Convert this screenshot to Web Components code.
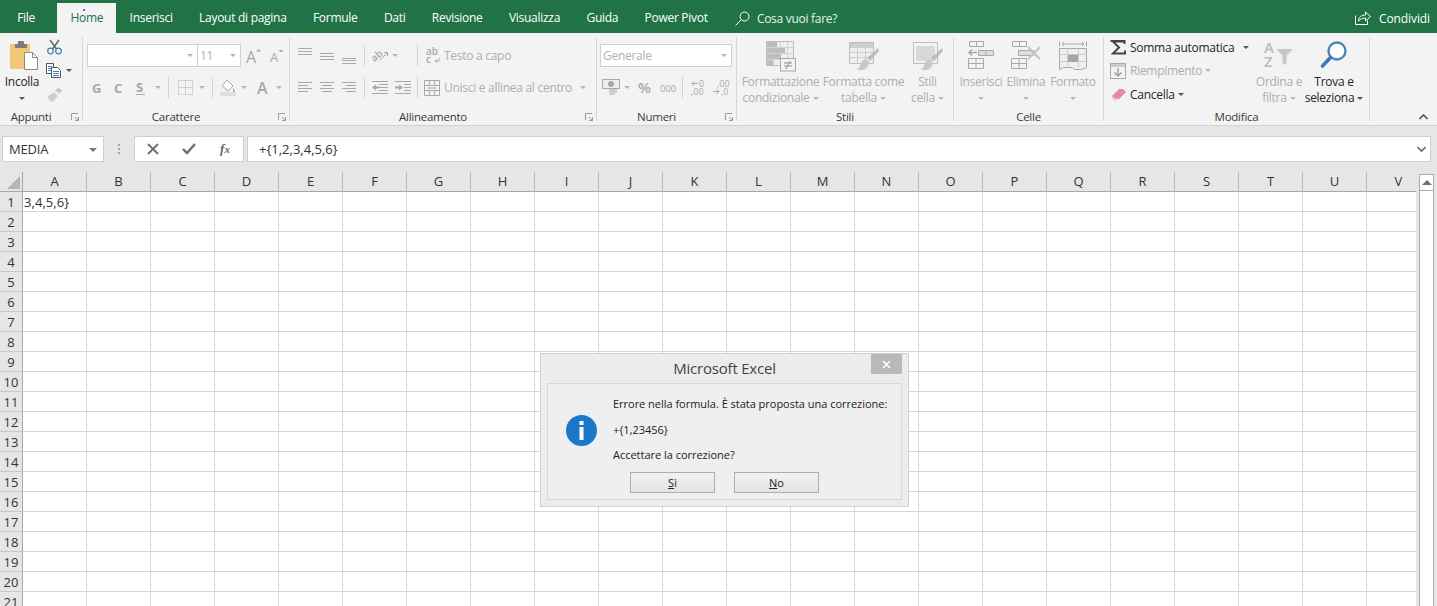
<!DOCTYPE html>
<html lang="it">
<head>
<meta charset="utf-8">
<title>Excel</title>
<style>
html,body{margin:0;height:100%;overflow:hidden;background:#e6e6e6}
body{font-family:"Open Sans","Liberation Sans",sans-serif;font-size:12px}
</style>
</head>
<body>
<xl-app>
  <xl-tabbar></xl-tabbar>
  <xl-ribbon>
    <xl-group label="Appunti" launcher w="83">
      <div style="display:flex">
        <xl-big icon="paste" w="44">Incolla<br></xl-big>
        <div style="display:grid;grid-template-rows:20px 26px 22px">
          <xl-row><xl-icon name="scissors" box="20"></xl-icon></xl-row>
          <xl-row><xl-icon name="copy" box="20"></xl-icon><xl-caret box="10" on></xl-caret></xl-row>
          <xl-row><xl-icon name="brush" box="20"></xl-icon></xl-row>
        </div>
      </div>
    </xl-group>
    <xl-group label="Carattere" launcher w="207">
      <xl-rows left="4">
        <xl-row><xl-combo w="111"></xl-combo><xl-combo w="44" value="11"></xl-combo><xl-icon name="growA" box="23" style="margin-left:2px"></xl-icon><xl-icon name="shrinkA" box="23"></xl-icon></xl-row>
        <xl-row><xl-icon name="bold" box="21" style="margin-left:-1px"></xl-icon><xl-icon name="italic" box="23"></xl-icon><xl-icon name="under" box="22"></xl-icon><xl-caret box="11"></xl-caret><xl-sep box="11"></xl-sep><xl-icon name="borders" box="22"></xl-icon><xl-caret box="11"></xl-caret><xl-sep box="10"></xl-sep><xl-icon name="fill" box="24" style="margin-left:-1px"></xl-icon><xl-caret box="8"></xl-caret><xl-icon name="fontA" box="28" style="margin-left:1px"></xl-icon><xl-caret box="4"></xl-caret></xl-row>
      </xl-rows>
    </xl-group>
    <xl-group label="Allineamento" launcher w="307">
      <xl-rows left="4">
        <xl-row><xl-icon name="atop" box="22"></xl-icon><xl-icon name="amid" box="22"></xl-icon><xl-icon name="abot" box="22"></xl-icon><xl-sep box="8"></xl-sep><xl-icon name="orient" box="24"></xl-icon><xl-caret box="6"></xl-caret><span style="width:14px"></span><xl-sep box="10"></xl-sep><xl-icon name="wrap" box="22"></xl-icon><xl-text dim>Testo a capo</xl-text></xl-row>
        <xl-row><xl-icon name="aleft" box="22"></xl-icon><xl-icon name="acenter" box="22"></xl-icon><xl-icon name="aright" box="22"></xl-icon><xl-sep box="8"></xl-sep><xl-icon name="outdent" box="24"></xl-icon><xl-icon name="indent" box="22"></xl-icon><xl-sep box="6"></xl-sep><xl-icon name="merge" box="24"></xl-icon><xl-text dim style="width:134px">Unisci e allinea al centro</xl-text><xl-caret box="10"></xl-caret></xl-row>
      </xl-rows>
    </xl-group>
    <xl-group label="Numeri" launcher w="140">
      <xl-rows left="3">
        <xl-row><xl-combo w="132" value="Generale" tight></xl-combo></xl-row>
        <xl-row><xl-icon name="money" box="22"></xl-icon><xl-caret box="10"></xl-caret><xl-icon name="percent" box="26"></xl-icon><xl-icon name="thousand" box="19"></xl-icon><xl-sep box="10"></xl-sep><xl-icon name="decup" box="21"></xl-icon><xl-icon name="decdown" box="23"></xl-icon></xl-row>
      </xl-rows>
    </xl-group>
    <xl-group label="Stili" w="217">
      <div style="display:flex;padding-left:2px">
        <xl-big icon="condfmt" w="83" dim caret>Formattazione<br>condizionale</xl-big>
        <xl-big icon="tablefmt" w="83" dim caret>Formatta come<br>tabella</xl-big>
        <xl-big icon="cellstyle" w="45" dim caret>Stili<br>cella</xl-big>
      </div>
    </xl-group>
    <xl-group label="Celle" w="150">
      <div style="display:flex;padding-left:4px">
        <xl-big icon="insert" w="46" dim>Inserisci<br></xl-big>
        <xl-big icon="delete" w="44" dim>Elimina<br></xl-big>
        <xl-big icon="format" w="50" dim>Formato<br></xl-big>
      </div>
    </xl-group>
    <xl-group label="Modifica" w="266">
      <div style="display:flex;padding-left:4px">
        <div style="width:146px;display:grid;grid-template-rows:20px 27px 20px">
          <xl-row><xl-icon name="sigma" box="20"></xl-icon><xl-text strong style="width:112px;margin-left:2px">Somma automatica</xl-text><xl-caret box="8" on></xl-caret></xl-row>
          <xl-row><xl-icon name="fillrow" box="20"></xl-icon><xl-text dim style="margin:0 3px 0 2px">Riempimento</xl-text><xl-caret box="6"></xl-caret></xl-row>
          <xl-row><xl-icon name="eraser" box="20"></xl-icon><xl-text strong style="margin:0 3px 0 2px">Cancella</xl-text><xl-caret box="6" on></xl-caret></xl-row>
        </div>
        <xl-big icon="sort" w="50" dim caret>Ordina e<br>filtra</xl-big>
        <xl-big icon="find" w="60" caret>Trova e<br>seleziona</xl-big>
      </div>
    </xl-group>
    <xl-collapse></xl-collapse>
  </xl-ribbon>
  <xl-formula-bar name="MEDIA" value="+{1,2,3,4,5,6}"></xl-formula-bar>
  <xl-sheet></xl-sheet>
  <xl-dialog title-text="Microsoft Excel">
    <span>Errore nella formula. È stata proposta una correzione:</span>
    <span>+{1,23456}</span>
    <span>Accettare la correzione?</span>
  </xl-dialog>
</xl-app>

<script>
// icon set, each one is [width, height, inner svg]
const dim = "#c4c4c4", dk = "#a8a8a8";
const lines = (ys, xs) => ys.map((y, i) => `<path d="M${xs[i][0]} ${y + .5}H${xs[i][1]}" stroke="${dk}"/>`).join("");
const full = [[0, 14], [0, 14], [0, 14]];
const txt = (x, y, s, t, fill, extra = "") => `<text x="${x}" y="${y}" font-size="${s}" fill="${fill}" font-family="Open Sans, sans-serif" ${extra}>${t}</text>`;
const brushShape = `<path d="M29 7l1 3-9 10-3-3z" fill="#bdbdbd"/><path d="M17 18l3 3c0 3-2 7-6 8H7c3-1 4-4 5-7 1-2 3-4 5-4z" fill="#c9c9c9"/>`;
const ICONS = {
  paste: [36, 32, `<g transform="translate(4 -2)"><rect x="2" y="5" width="20" height="25" rx="1" fill="#f0c878"/><path d="M7 9V5h3V3a1 1 0 0 1 1-1h4a1 1 0 0 1 1 1v2h3v4z" fill="#7d7d7d"/><path d="M16.500 13.500h8l5 5v12h-13z" fill="#fff" stroke="#8a8a8a"/><path d="M24.500 13.500v5h5" fill="none" stroke="#8a8a8a"/></g>`],
  scissors: [15, 16, `<circle cx="3.500" cy="12" r="2.800" fill="none" stroke="#3f7fbf" stroke-width="1.200"/><circle cx="11.500" cy="12" r="2.800" fill="none" stroke="#3f7fbf" stroke-width="1.200"/><path d="M3 1l6.500 9M12 1L5.500 10" stroke="#666" stroke-width="1.500" fill="none"/>`],
  copy: [16, 15, `<path d="M.5.500h7v10h-7z" fill="#fff" stroke="#555"/><path d="M2 3.500h4M2 5.500h4M2 7.500h4" stroke="#3f7fbf"/><path d="M5.500 4.500h6l3 3v7h-9z" fill="#fff" stroke="#555"/><path d="M7 8.500h6M7 10.500h6M7 12.500h6" stroke="#3f7fbf"/>`],
  brush: [17, 15, `<path d="M1 10l7-5 4 4-5 6-3-1-1-2z" fill="#cfcfcf"/><path d="M9 4l3-3 4 2-3 4z" fill="#c0c0c0"/><path d="M10.500 3.500l2.500 3" stroke="#f3f3f3"/>`],
  growA: [16, 16, txt(0, 15, 16, "A", dk) + `<path d="M10 3.500h5L12.500 1z" fill="${dk}"/>`],
  shrinkA: [14, 14, txt(0, 13, 13, "A", dk) + `<path d="M8.500 1h5L11 3.500z" fill="${dk}"/>`],
  bold: [12, 15, txt(1, 13, 13, "G", dk, 'font-weight="700"')],
  italic: [12, 15, txt(1, 13, 13, "C", dk, 'font-weight="700"')],
  under: [12, 17, txt(1, 13, 13, "S", dk, 'font-weight="700"') + `<path d="M1 15.500h9" stroke="${dk}"/>`],
  borders: [15, 15, `<path d="M.5.500h14v14H.5zM.5 7.500h14M7.500.500v14" fill="none" stroke="#b9a9bf" stroke-dasharray="1 1"/>`],
  fill: [17, 17, `<path d="M7 1l6 6-5 5-6-5z" fill="#fff" stroke="${dk}"/><path d="M13 9c1 1.500 2 2.500 2 3.500a1 1 0 0 1-2 0z" fill="${dk}"/><rect x="0" y="13" width="16" height="4" fill="#dfdfdf"/>`],
  fontA: [14, 15, txt(1, 14, 16, "A", dk, 'font-weight="600"')],
  atop: [14, 17, lines([1, 4, 7], full)],
  amid: [14, 17, lines([6, 9, 12], full)],
  abot: [14, 17, lines([11, 13, 16], full)],
  orient: [18, 15, txt(0, 11, 10, "ab", dk, 'transform="rotate(-40 6 8)" font-weight="600"') + `<path d="M9 12l7-7M13 4.500h3.500V8" stroke="${dk}" fill="none"/>`],
  wrap: [15, 17, `<text x="0" y="8" font-size="10" fill="${dk}" font-family="Open Sans, sans-serif" font-weight="600">ab<tspan x="0" y="16">c</tspan></text><path d="M9 14h4v-3M9 14l2-1.500M9 14l2 1.500" stroke="${dk}" fill="none"/>`],
  aleft: [14, 11, lines([0, 3, 6, 9], [[0, 14], [0, 10], [0, 14], [0, 10]])],
  acenter: [14, 11, lines([0, 3, 6, 9], [[0, 14], [2, 12], [0, 14], [2, 12]])],
  aright: [14, 11, lines([0, 3, 6, 9], [[0, 14], [4, 14], [0, 14], [4, 14]])],
  outdent: [16, 13, lines([0, 12], [[0, 16], [0, 16]]) + `<path d="M7 3.500h9M7 6.500h9M7 9.500h9" stroke="${dk}"/><path d="M0 6.500L4 3.500v2h3v2H4v2z" fill="${dk}"/>`],
  indent: [16, 13, lines([0, 12], [[0, 16], [0, 16]]) + `<path d="M9 3.500h7M9 6.500h7M9 9.500h7" stroke="${dk}"/><path d="M8 6.500L4 3.500v2H0v2h4v2z" fill="${dk}"/>`],
  merge: [16, 16, `<path d="M.5.500h15v15H.5zM.5 5.500h15M.5 10.500h15M5.500.500v5M10.500.500v5M5.500 10.500v5M10.500 10.500v5" fill="none" stroke="${dk}"/><path d="M3 8h10" stroke="${dk}"/>`],
  money: [18, 17, `<rect x=".5" y=".5" width="17" height="9" fill="#eee" stroke="${dk}"/><circle cx="9" cy="5" r="3" fill="${dk}"/><path d="M7 11h8M7 13h8M7 15h6" stroke="${dim}" stroke-width="1.500"/>`],
  percent: [15, 15, txt(0, 13, 15, "%", dk, 'font-weight="600"')],
  thousand: [15, 12, txt(0, 10, 9.500, "000", dk)],
  decup: [16, 17, `<path d="M8 4.500H2M4.500 2L2 4.500 4.500 7" stroke="${dk}" fill="none"/><text font-size="9" fill="${dk}" font-family="Open Sans, sans-serif" x="9" y="8">0<tspan x="1" y="16">,00</tspan></text>`],
  decdown: [16, 17, `<path d="M1 12.500h6M4.500 10L7 12.500 4.500 15" stroke="${dk}" fill="none"/><text font-size="9" fill="${dk}" font-family="Open Sans, sans-serif" x="5" y="8">,00<tspan x="9" y="16">,0</tspan></text>`],
  condfmt: [30, 31, `<path d="M.5.500h27v24H.5z" fill="#f1edf1" stroke="#bdbdbd"/><path d="M.5 6.500h27M.5 12.500h27M.5 18.500h27M7.500.500v24M14.500.500v24M21.500.500v24" stroke="#d4d4d4"/><path d="M1 1h10v5H1zM1 7h18v5H1zM1 13h14v5H1zM1 19h6v5H1z" fill="#bdbdbd"/><rect x="14.500" y="17.500" width="15" height="12.500" fill="#f3f3f3" stroke="#a6a6a6"/><path d="M18 22h8M18 25h8M24 20l-4 8" stroke="#8f8f8f" fill="none"/>`],
  tablefmt: [30, 31, `<path d="M.5 1.500h24v21H.5z" fill="#eee" stroke="#bdbdbd"/><path d="M1 2h23v4H1z" fill="#cfcfcf"/><path d="M.5 6.500h24M.5 11.500h24M.5 16.500h24M8.500 1.500v21M16.500 1.500v21" stroke="#cdcdcd"/>` + brushShape],
  cellstyle: [30, 31, `<path d="M.5 1.500h24v21H.5z" fill="#f3f3f3" stroke="#bdbdbd"/><rect x="3" y="5" width="19" height="15" fill="#d8d8d8"/>` + brushShape],
  insert: [26, 28, `<path d="M1.500.500h14v5h-14zM8.500.500v5M.5 17.500h15v10H.5zM.5 22.500h15M8 17.500v10" fill="none" stroke="${dk}"/><path d="M1 11.500h8M4 8.500l-3 3 3 3" stroke="${dk}" fill="none" stroke-width="1.500"/><path d="M10.500 9.500h15v5h-15zM18 9.500v5" fill="#ddd" stroke="${dk}"/>`],
  delete: [30, 28, `<path d="M1.500.500h14v5h-14zM8.500.500v5M.5 17.500h15v10H.5zM.5 22.500h15M8 17.500v10" fill="none" stroke="${dk}"/><path d="M7.500 9.500h15v5h-15z" fill="#ddd" stroke="${dk}"/><path d="M17 6l12 12M29 6L17 18" stroke="${dim}" stroke-width="2"/>`],
  format: [28, 31, `<path d="M.5 .5v5M27.500 .5v5M3 3h22M3 3l2-2M3 3l2 2M25 3l-2-2M25 3l-2 2" stroke="${dk}" fill="none"/><path d="M.5 7.500h27v19l-5 2h-7l-2-2h-9l-4 2z" fill="#f1edf1" stroke="${dk}"/><path d="M.5 13.500h27M.5 20.500h27M8.500 7.500v19M19.500 7.500v19" stroke="#ccc"/><rect x="9" y="14" width="10" height="7" fill="#a6a6a6"/>`],
  sigma: [16, 15, `<path d="M.5 1h14v3M14 1.500H3l6 6-6 6h12v-3" fill="none" stroke="#444" stroke-width="2"/>`],
  fillrow: [16, 16, `<rect x=".5" y=".5" width="15" height="15" fill="#f3f3f3" stroke="${dk}"/><rect x="1" y="1" width="14" height="3" fill="#ccc"/><path d="M8 5v8M4.500 9.500L8 13l3.500-3.500" stroke="#999" stroke-width="1.300" fill="none"/>`],
  eraser: [15, 13, `<path d="M1 8l7-7h4l3 3-7 7H5z" fill="#e88a9a"/><path d="M1 8l4 4-1 1-3-3z" fill="#f2b6c0"/>`],
  sort: [30, 26, `<text font-size="15" fill="#bdbdbd" font-family="Open Sans, sans-serif" font-weight="600" x="0" y="12">A<tspan x="0" y="26">Z</tspan></text><path d="M12 8h17l-6.500 6.500V24l-4-2v-7.500z" fill="#c6c6c6"/>`],
  find: [28, 27, `<circle cx="17" cy="10" r="8.500" fill="#fff" stroke="#4a86c0" stroke-width="2.400"/><path d="M10.500 16.500L2.500 25" stroke="#3f78b4" stroke-width="3.600" stroke-linecap="round"/>`]
};

class XlApp extends HTMLElement{
  constructor(){
    super();
    this.attachShadow({ mode: "open" }).innerHTML = `
      <style>
        :host{display:flex;flex-direction:column;height:606px;width:1437px;position:relative;overflow:hidden;color:#262626}
      </style>
      <slot></slot>`;
  }
}

class XlTabbar extends HTMLElement{
  constructor(){
    super();
    const tabs = ["File","Home","Inserisci","Layout di pagina","Formule","Dati","Revisione","Visualizza","Guida","Power Pivot"];
    this.attachShadow({ mode: "open" }).innerHTML = `
      <style>
        :host{display:flex;height:33px;background:#217346;color:#fff;padding-left:4px;align-items:flex-end;flex:none}
        .tab{height:30px;line-height:29px;padding:0 13.2px;white-space:nowrap;font-size:12px;letter-spacing:-.28px}
        .tab.file{margin-right:9px}
        .on{background:#f3f3f3;color:#217346;position:relative}
        .on b{position:absolute;left:26px;top:6px;width:2px;height:2px;background:#3a3ad0;border-radius:50%}
        .tell{display:flex;align-items:center;gap:7px;height:30px;margin-left:14px;color:#e8f0eb;font-size:12px;letter-spacing:-.28px}
        .share{margin-left:auto;display:flex;align-items:center;gap:8px;height:30px;padding-right:7px;font-size:12px;letter-spacing:-.1px}
      </style>
      ${tabs.map(t => `<div class="tab ${t == "Home" ? "on" : ""} ${t == "File" ? "file" : ""}">${t == "Home" ? "<b></b>" : ""}${t}</div>`).join("")}
      <div class="tell">
        <svg width="15" height="15" viewBox="0 0 15 15" fill="none" stroke="#fff"><circle cx="9.500" cy="5.500" r="4.500"/><path d="M6 9l-5.500 5.500"/></svg>
        <span>Cosa vuoi fare?</span>
      </div>
      <div class="share">
        <svg width="16" height="14" viewBox="0 0 16 14" fill="none" stroke="#fff"><path d="M.5 4.500v9h12v-4"/><path d="M3.500 10c0-4 3-6 7-6V1l5 4.500-5 4.500V7c-3 0-5 1-7 3z"/></svg>
        <span>Condividi</span>
      </div>`;
  }
}

class XlRibbon extends HTMLElement{
  constructor(){
    super();
    this.attachShadow({ mode: "open" }).innerHTML = `
      <style>
        :host{display:flex;height:92px;background:#f3f3f3;border-bottom:1px solid #d2d2d2;flex:none;position:relative}
      </style>
      <slot></slot>`;
  }
}

class XlGroup extends HTMLElement{
  constructor(){
    super();
    this.attachShadow({ mode: "open" }).innerHTML = `
      <style>
        :host{display:flex;flex-direction:column;box-sizing:border-box;height:84px;margin-top:4px;border-right:1px solid #d6d6d6;flex:none}
        .body{height:73px;flex:none;overflow:hidden}
        .foot{display:flex;height:13px;flex:none;align-items:center;font-size:11.500px;letter-spacing:-.25px;color:#3a3a3a}
        .foot span{flex:1;text-align:center}
        .launch{width:20px;display:flex;padding-left:9px;box-sizing:border-box}
      </style>
      <div class="body"><slot></slot></div>
      <div class="foot"><span></span><div class="launch"><svg width="8" height="8" viewBox="0 0 8 8" fill="none" stroke="#9b9b9b"><path d="M.5 7V.5H7M4 4l3.500 3.500M7.500 4v3.500H4"/></svg></div></div>`;
  }
  connectedCallback(){
    this.style.width = this.getAttribute("w") + "px";
    this.shadowRoot.querySelector(".foot span").textContent = this.getAttribute("label");
    if(!this.hasAttribute("launcher")) this.shadowRoot.querySelector(".launch").style.display = "none";
  }
}

class XlRows extends HTMLElement{
  constructor(){
    super();
    this.attachShadow({ mode: "open" }).innerHTML = `
      <style>
        :host{display:grid;grid-template-rows:23px 23px;row-gap:9px;padding-top:7px}
      </style>
      <slot></slot>`;
  }
  connectedCallback(){ this.style.paddingLeft = (this.getAttribute("left") || 0) + "px"; }
}

class XlRow extends HTMLElement{
  constructor(){
    super();
    this.attachShadow({ mode: "open" }).innerHTML = `
      <style>:host{display:flex;align-items:center;min-width:0}</style><slot></slot>`;
  }
}

class XlIcon extends HTMLElement{
  constructor(){
    super();
    this.attachShadow({ mode: "open" });
  }
  connectedCallback(){
    const [w, h, inner] = ICONS[this.getAttribute("name")];
    const box = this.getAttribute("box") || w;
    this.shadowRoot.innerHTML = `
      <style>:host{display:flex;justify-content:center;align-items:center;flex:none;width:${box}px}svg{display:block;flex:none;overflow:visible}</style>
      <svg width="${w}" height="${h}" viewBox="0 0 ${w} ${h}">${inner}</svg>`;
  }
}

class XlCaret extends HTMLElement{
  constructor(){
    super();
    this.attachShadow({ mode: "open" }).innerHTML = `
      <style>
        :host{display:flex;justify-content:center;align-items:center;flex:none}
        i{border:3px solid transparent;border-top:3px solid #b5b5b5;border-bottom:0;width:0;height:0}
        :host([on]) i{border-top-color:#555}
      </style><i></i>`;
  }
  connectedCallback(){ this.style.width = this.getAttribute("box") + "px"; }
}

class XlSep extends HTMLElement{
  constructor(){
    super();
    this.attachShadow({ mode: "open" }).innerHTML = `
      <style>:host{display:flex;justify-content:center;flex:none;height:21px}i{width:1px;background:#d2d2d2}</style><i></i>`;
  }
  connectedCallback(){ this.style.width = this.getAttribute("box") + "px"; }
}

class XlText extends HTMLElement{
  constructor(){
    super();
    this.attachShadow({ mode: "open" }).innerHTML = `
      <style>
        :host{display:block;flex:none;white-space:nowrap;font-size:12px;letter-spacing:-.28px;color:#262626}
        :host([dim]){color:#aeaeae}
      </style><slot></slot>`;
  }
}

class XlCombo extends HTMLElement{
  constructor(){
    super();
    this.attachShadow({ mode: "open" });
  }
  connectedCallback(){
    this.shadowRoot.innerHTML = `
      <style>
        :host{display:flex;box-sizing:border-box;width:${this.getAttribute("w")}px;height:23px;background:#fff;border:1px solid #d0d0d0;align-items:center;flex:none;font-size:12px;letter-spacing:-.28px;color:#b0b0b0;padding-left:2px;margin-right:-1px}
        span{flex:1;white-space:nowrap}
        i{border:3px solid transparent;border-top:3px solid #b5b5b5;border-bottom:0;margin-right:4px}
      </style>
      <span>${this.getAttribute("value") || ""}</span><i></i>`;
  }
}

class XlBig extends HTMLElement{
  constructor(){
    super();
    this.attachShadow({ mode: "open" });
  }
  connectedCallback(){
    const [w, h, inner] = ICONS[this.getAttribute("icon")];
    const caret = this.hasAttribute("caret");
    this.shadowRoot.innerHTML = `
      <style>
        :host{display:flex;flex-direction:column;align-items:center;flex:none;width:${this.getAttribute("w")}px;color:#262626;font-size:12px;letter-spacing:-.28px}
        :host([dim]){color:#aeaeae}
        .ic{height:31px;margin-top:4px;display:flex;align-items:flex-start;justify-content:center}
        .ic svg{overflow:visible}
        .lb{margin-top:2px;text-align:center;line-height:16px;white-space:nowrap}
        i{display:inline-block;border:3px solid transparent;border-top:3px solid #b5b5b5;border-bottom:0;vertical-align:2px;margin-left:3px}
        :host(:not([dim])) i{border-top-color:#555}
        .solo i{margin-left:0}
      </style>
      <div class="ic"><svg width="${w}" height="${h}" viewBox="0 0 ${w} ${h}">${inner}</svg></div>
      <div class="lb ${caret ? "" : "solo"}"><slot></slot><i></i></div>`;
  }
}

class XlCollapse extends HTMLElement{
  constructor(){
    super();
    this.attachShadow({ mode: "open" }).innerHTML = `
      <style>:host{position:absolute;right:9px;bottom:5px;display:block;height:6px}svg{display:block}</style>
      <svg width="9" height="6" viewBox="0 0 9 6" fill="none" stroke="#555" stroke-width="1.600"><path d="M.5 5L4.500 1l4 4"/></svg>`;
  }
}

class XlFormulaBar extends HTMLElement{
  constructor(){
    super();
    this.attachShadow({ mode: "open" });
  }
  connectedCallback(){
    this.shadowRoot.innerHTML = `
      <style>
        :host{display:flex;flex:none;height:46px;box-sizing:border-box;padding:10px 6px 10px 2px;background:#e6e6e6;align-items:stretch}
        .box{background:#fff;border:1px solid #cfcfcf;box-sizing:border-box;display:flex;align-items:center}
        .name{width:102px;padding:0 6px;font-size:13px;color:#333;justify-content:space-between;letter-spacing:-.2px}
        .name i{border:4px solid transparent;border-top:4px solid #777;border-bottom:0;margin-top:1px}
        .dots{width:30px;display:flex;flex-direction:column;align-items:center;justify-content:center;gap:2px}
        .dots b{width:2px;height:2px;background:#a6a6a6}
        .btns{width:110px;display:grid;grid-template-columns:repeat(3,36px);justify-items:center}
        .btns em{font:italic 700 13px "Liberation Serif",serif;color:#666}
        .input{flex:1;margin-left:3px;padding-left:11px;font-size:13px;color:#333;justify-content:space-between;padding-right:4px}
      </style>
      <div class="box name"><span>${this.getAttribute("name")}</span><i></i></div>
      <div class="dots"><b></b><b></b><b></b></div>
      <div class="box btns">
        <svg width="12" height="12" viewBox="0 0 12 12" stroke="#6e6e6e" stroke-width="1.800"><path d="M1 1l10 10M11 1L1 11"/></svg>
        <svg width="14" height="12" viewBox="0 0 14 12" fill="none" stroke="#6e6e6e" stroke-width="2.400"><path d="M1 6l4 4 8-9"/></svg>
        <em>f<small>x</small></em>
      </div>
      <div class="box input"><span>${this.getAttribute("value")}</span>
        <svg width="9" height="6" viewBox="0 0 9 6" fill="none" stroke="#666" stroke-width="1.600"><path d="M.5 1l4 4 4-4"/></svg>
      </div>`;
  }
}

class XlSheet extends HTMLElement{
  constructor(){
    super();
    const cols = "ABCDEFGHIJKLMNOPQRSTUV".split("");
    let html = `<div class="corner"><i></i></div>` + cols.map(c => `<div class="ch">${c}</div>`).join("");
    for(let r = 1; r <= 21; r++){
      html += `<div class="rh">${r}</div>`;
      cols.forEach((c, i) => { html += `<div class="c">${r == 1 && i == 0 ? "3,4,5,6}" : ""}</div>`; });
    }
    this.attachShadow({ mode: "open" }).innerHTML = `
      <style>
        :host{display:flex;flex:1;min-height:0;background:#e6e6e6;overflow:hidden}
        .wrap{width:1416px;overflow:hidden;flex:none}
        .grid{display:grid;grid-template-columns:23px repeat(22,64px);grid-template-rows:20px repeat(21,20px);width:1431px;color:#333}
        .corner{background:#e6e6e6;border-right:1px solid #a8a8a8;border-bottom:1px solid #a8a8a8;box-sizing:border-box;display:flex;justify-content:flex-end;align-items:flex-end;padding:0 2px 2px 0}
        .corner i{border-style:solid;border-width:0 0 13px 13px;border-color:transparent transparent #b5b5b5 transparent}
        .ch{background:#e6e6e6;border-right:1px solid #b8b8b8;border-bottom:1px solid #a8a8a8;box-sizing:border-box;text-align:center;line-height:18px;font-size:13px}
        .rh{background:#e6e6e6;border-right:1px solid #a8a8a8;border-bottom:1px solid #c8c8c8;box-sizing:border-box;text-align:center;line-height:20px;font-size:13px}
        .c{background:#fff;border-right:1px solid #d6d6d6;border-bottom:1px solid #d6d6d6;box-sizing:border-box;padding-left:1px;line-height:20px;font-size:13px;white-space:nowrap;letter-spacing:.05px}
        .bar{width:15px;margin:2px 0 0 3px;box-sizing:border-box;background:#fff;border:1px solid #ababab;border-width:0 1px;flex:none}
        .up{height:17px;background:#fff;border:1px solid #ababab;box-sizing:border-box;margin:0 -1px;display:flex;align-items:center;justify-content:center}
        .up i{border:5px solid transparent;border-bottom:5px solid #6e6e6e;border-top:0}
      </style>
      <div class="wrap"><div class="grid">${html}</div></div>
      <div class="bar"><div class="up"><i></i></div></div>`;
  }
}

class XlDialog extends HTMLElement{
  constructor(){
    super();
    this.attachShadow({ mode: "open" });
  }
  connectedCallback(){
    this.shadowRoot.innerHTML = `
      <style>
        :host{position:absolute;left:540px;top:353px;width:369px;height:154px;box-sizing:border-box;background:#ececec;border:1px solid #d0d0d0;display:flex;flex-direction:column;padding:0 6px 6px}
        .title{height:29px;flex:none;text-align:center;font-size:15px;line-height:29px;color:#444;letter-spacing:-.2px}
        .x{position:absolute;right:6px;top:0;width:31px;height:20px;background:#b9b9b9;display:flex;align-items:center;justify-content:center}
        .in{flex:1;background:#efefef;border:1px solid #d8d8d8;display:flex;flex-direction:column}
        .msg{display:flex;height:88px}
        .ic{width:65px;display:flex;justify-content:center;align-items:center;flex:none;padding:4px 0 0 2px;box-sizing:border-box}
        .tx{display:flex;flex-direction:column;font-size:11px;color:#222;padding-top:7px;white-space:nowrap;letter-spacing:-.02px}
        ::slotted(span){display:block;height:25.500px;line-height:25.500px}
        .btns{display:flex;gap:19px;padding-left:82px}
        .b{width:85px;height:21px;box-sizing:border-box;border:1px solid #adadad;background:linear-gradient(#f2f2f2,#e4e4e4);text-align:center;font-size:11px;line-height:19px;color:#222}
        u{text-decoration:underline}
      </style>
      <div class="title">${this.getAttribute("title-text")}</div>
      <div class="x"><svg width="9" height="9" viewBox="0 0 9 9" stroke="#fff" stroke-width="1.500"><path d="M1 1l7 7M8 1L1 8"/></svg></div>
      <div class="in">
        <div class="msg">
          <div class="ic"><svg width="31" height="31" viewBox="0 0 31 31"><circle cx="15.500" cy="15.500" r="15.500" fill="#1b78c9"/><rect x="13.500" y="12" width="4" height="13" fill="#fff"/><rect x="13.500" y="6" width="4" height="4" fill="#fff"/></svg></div>
          <div class="tx"><slot></slot></div>
        </div>
        <div class="btns"><div class="b"><u>S</u>ì</div><div class="b"><u>N</u>o</div></div>
      </div>`;
  }
}

const defs = { "xl-app": XlApp, "xl-tabbar": XlTabbar, "xl-ribbon": XlRibbon, "xl-group": XlGroup, "xl-rows": XlRows, "xl-row": XlRow, "xl-icon": XlIcon, "xl-caret": XlCaret, "xl-sep": XlSep, "xl-text": XlText, "xl-combo": XlCombo, "xl-big": XlBig, "xl-collapse": XlCollapse, "xl-formula-bar": XlFormulaBar, "xl-sheet": XlSheet, "xl-dialog": XlDialog };
Object.keys(defs).forEach(k => window.customElements.define(k, defs[k]));
</script>
</body>
</html>
